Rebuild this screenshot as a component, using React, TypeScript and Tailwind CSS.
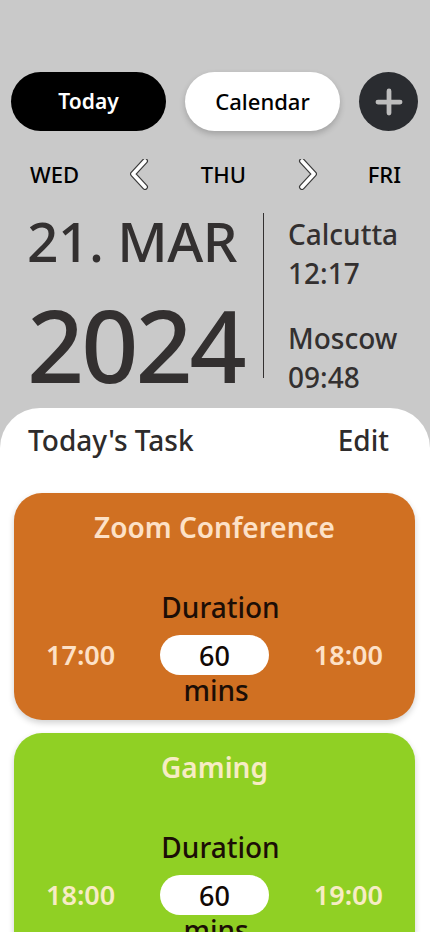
import { Plus } from 'lucide-react';

type Task = {
  title: string;
  start: string;
  end: string;
  mins: number;
  bg: string;
  accent: string;
};

const TASKS: Task[] = [
  { title: 'Zoom Conference', start: '17:00', end: '18:00', mins: 60, bg: 'bg-[#d07022]', accent: 'text-[#fde1c7]' },
  { title: 'Gaming', start: '18:00', end: '19:00', mins: 60, bg: 'bg-[#90d024]', accent: 'text-[#f7ecc4]' },
];

function Chevron({ dir }: { dir: 'left' | 'right' }) {
  const d = dir === 'left' ? 'M15 2 L3 15 L15 28' : 'M5 2 L17 15 L5 28';
  return (
    <svg width="20" height="31" viewBox="0 0 20 31" className="shrink-0">
      <path d={d} fill="none" stroke="#3a3a3a" strokeWidth="6" strokeLinecap="round" strokeLinejoin="round" />
      <path d={d} fill="none" stroke="#ffffff" strokeWidth="3.6" strokeLinecap="round" strokeLinejoin="round" />
    </svg>
  );
}

function TaskCard({ task }: { task: Task }) {
  return (
    <div className={`${task.bg} rounded-[28px] shadow-[0_3px_6px_rgba(0,0,0,0.18)] h-[227px] flex flex-col items-center pt-[14px]`}>
      <div className={`${task.accent} text-[28px] font-semibold leading-[40px]`}>{task.title}</div>
      <div className="mt-[42px] ml-[12px] text-[#1c0e06] text-[28px] font-medium leading-[36px]">Duration</div>
      <div className="w-full flex items-center justify-between px-[32px] mt-[10px]">
        <span className={`${task.accent} text-[27px] font-semibold leading-[40px]`}>{task.start}</span>
        <span className="bg-white rounded-full w-[109px] h-[40px] flex items-center justify-center text-[27px] font-medium text-[#120804] leading-none">
          {task.mins}
        </span>
        <span className={`${task.accent} text-[27px] font-semibold leading-[40px]`}>{task.end}</span>
      </div>
      <div className="ml-[3px] text-[#1c0e06] text-[28px] font-medium leading-[30px]">mins</div>
    </div>
  );
}

export default function App() {
  return (
    <div className="h-[932px] overflow-hidden bg-[#c9c9c9] flex flex-col font-['Noto_Sans',sans-serif]">
      {/* Tabs */}
      <div className="pt-[72px] px-[11px] flex items-center gap-[19px]">
        <button className="w-[155px] h-[59px] rounded-full bg-black text-white text-[21px] font-semibold">Today</button>
        <button className="w-[155px] h-[59px] rounded-full bg-white text-black text-[22px] font-medium shadow-[0_3px_6px_rgba(0,0,0,0.2)]">
          Calendar
        </button>
        <button className="w-[59px] h-[59px] rounded-full bg-[#2a2c30] flex items-center justify-center">
          <Plus className="w-[38px] h-[38px] text-[#bdbdbd]" strokeWidth={3} />
        </button>
      </div>

      {/* Day switcher */}
      <div className="mt-[27px] pl-[30px] pr-[29px] flex items-center justify-between text-[22px] font-medium text-black h-[32px]">
        <span>WED</span>
        <Chevron dir="left" />
        <span>THU</span>
        <Chevron dir="right" />
        <span>FRI</span>
      </div>

      {/* Date + clocks */}
      <div className="mt-[23px] h-[176px] flex text-[#333030]">
        <div className="w-[263px] shrink-0 pl-[27px]">
          <div className="-mt-[2px] text-[55px] leading-[60px] font-medium tracking-[-0.5px] whitespace-nowrap">21. MAR</div>
          <div className="mt-[23px] text-[100px] leading-[100px] font-medium tracking-[-3px]">2024</div>
        </div>
        <div className="w-px h-[165px] bg-[#333030]" />
        <div className="pl-[24px] text-[28px] font-medium leading-[34px]">
          <div className="mt-[4px]">Calcutta</div>
          <div className="mt-[5px]">12:17</div>
          <div className="mt-[31px]">Moscow</div>
          <div className="mt-[5px]">09:48</div>
        </div>
      </div>

      {/* Tasks panel */}
      <div className="mt-[19px] flex-1 bg-white rounded-t-[40px] px-[14px]">
        <div className="flex items-center justify-between pl-[14px] pr-[27px] pt-[14px] text-[28px] font-medium text-[#2e2b2b] leading-[36px]">
          <span>Today's Task</span>
          <span>Edit</span>
        </div>
        <div className="mt-[35px] flex flex-col gap-[13px] pr-px">
          {TASKS.map((t) => (
            <TaskCard key={t.title} task={t} />
          ))}
        </div>
      </div>
    </div>
  );
}
